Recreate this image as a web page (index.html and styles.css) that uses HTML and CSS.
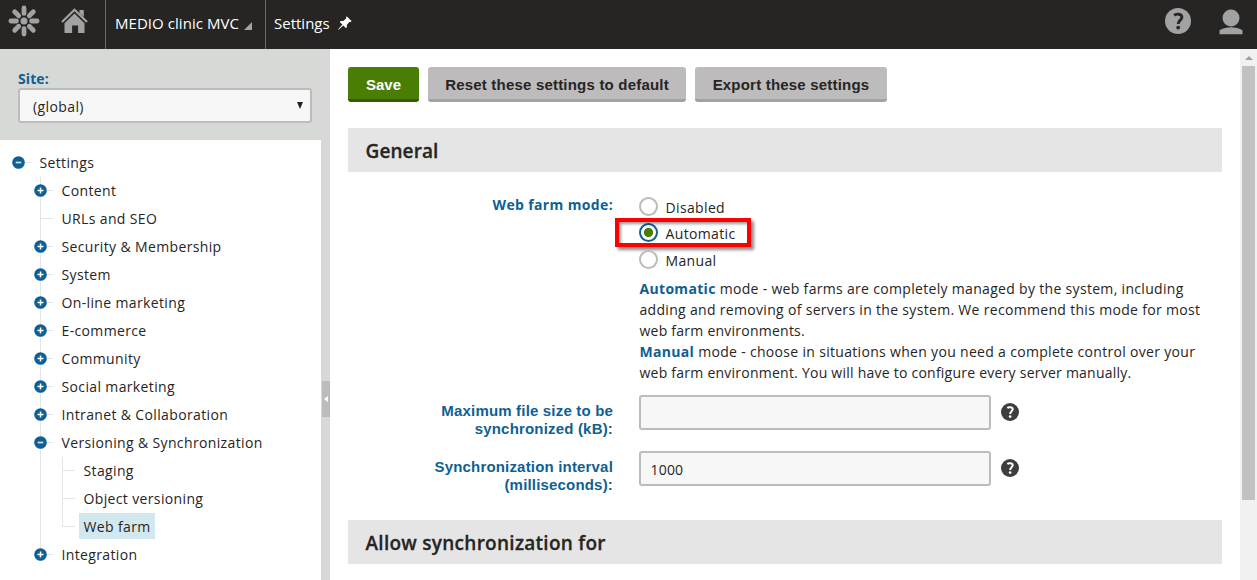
FILE: index.html
```
<!DOCTYPE html>
<html lang="en">
<head>
<meta charset="utf-8">
<title>Settings</title>
<link rel="stylesheet" href="styles.css">
</head>
<body>
<svg class="defs" width="0" height="0">
  <symbol id="plus" viewBox="0 0 13 13"><circle cx="6.5" cy="6.5" r="6.3" fill="#0f5f94"/><path d="M3.5 6.5h6M6.5 3.5v6" stroke="#fff" stroke-width="1.5"/></symbol>
  <symbol id="minus" viewBox="0 0 13 13"><circle cx="6.5" cy="6.5" r="6.3" fill="#0f5f94"/><path d="M3.7 6.5h5.6" stroke="#d3e3ee" stroke-width="1.7"/></symbol>
  <symbol id="help" viewBox="0 0 26 26"><circle cx="13" cy="13" r="13" fill="currentColor"/><path d="M9.2 7.4C11 5.6 16.900 5.500 16.900 9.200C16.900 12.100 13.200 12.200 13.200 16" fill="none" stroke="var(--mark)" stroke-width="2.9"/><circle cx="13.200" cy="19.600" r="1.900" fill="var(--mark)"/></symbol>
</svg>
<header class="topbar">
  <svg class="logo" width="32" height="32" viewBox="0 0 32 32" stroke="#a3a2a2" stroke-linecap="round" fill="none">
    <circle cx="16" cy="16" r="3.500" fill="#a3a2a2" stroke="none"/>
    <g stroke-width="4.800"><path d="M16 2.900v5.500M16 23.600v5.500M2.900 16h5.500M23.600 16h5.500M6.700 6.700l4 4M21.300 21.300l4 4M25.300 6.700l-4 4M10.700 21.300l-4 4"/></g>
  </svg>
  <svg class="home" width="27" height="26" viewBox="0 0 27 26"><path d="M1 14L13.500 1.800 26 14" fill="none" stroke="#a3a2a2" stroke-width="2.300"/><path d="M18.500 2h4.300v7l-4.300-4.100z" fill="#a3a2a2"/><path d="M3.500 15.200l10-9.700 10 9.700V25h-6.400v-7.500h-6V25H3.500z" fill="#a3a2a2"/></svg>
  <div class="site"><span class="site-name">MEDIO clinic MVC</span><svg width="8" height="8" viewBox="0 0 8 8"><path d="M8 0v8H0z" fill="#a3a2a2"/></svg></div>
  <div class="app"><span class="app-name">Settings</span><svg width="14" height="14" viewBox="0 0 14 14"><path d="M8.700.3L13.700 5.300 12.200 6 11.400 5.900 8.900 8.800 8.800 11.600 7.800 12 5.300 9.500.6 13.700.2 13.300 4.400 8.600 1.900 6.200 2.500 5.100 5.300 5 8.200 2.500 8 1.700z" fill="#fff"/></svg></div>
  <div class="tools">
    <svg class="help-top" width="26" height="26"><use href="#help"/></svg>
    <svg class="user" width="24" height="26" viewBox="0 0 24 26"><circle cx="12" cy="9" r="8.500" fill="#a3a2a2"/><path d="M.5 25.200v-4c4-2.200 7.400-3 11.500-3s7.500.8 11.500 3v4z" fill="#a3a2a2"/></svg>
  </div>
</header>
<div class="workspace">
  <aside class="sidebar">
    <div class="site-panel">
      <label class="site-label">Site:</label>
      <div class="select"><span class="global">(global)</span><svg width="6" height="7" viewBox="0 0 6 7"><path d="M0 0h6L3 7z" fill="#222"/></svg></div>
    </div>
    <div class="tree-area">
      <nav class="tree">
        <div class="node"><svg class="knob"><use href="#minus"/></svg><i class="twig"></i><span>Settings</span></div>
        <div class="branch">
          <div class="node"><svg class="knob"><use href="#plus"/></svg><i class="twig"></i><span>Content</span></div>
          <div class="node"><i class="knob"></i><i class="twig leaf"></i><span>URLs and SEO</span></div>
          <div class="node"><svg class="knob"><use href="#plus"/></svg><i class="twig"></i><span>Security &amp; Membership</span></div>
          <div class="node"><svg class="knob"><use href="#plus"/></svg><i class="twig"></i><span>System</span></div>
          <div class="node"><svg class="knob"><use href="#plus"/></svg><i class="twig"></i><span>On-line marketing</span></div>
          <div class="node"><svg class="knob"><use href="#plus"/></svg><i class="twig"></i><span>E-commerce</span></div>
          <div class="node"><svg class="knob"><use href="#plus"/></svg><i class="twig"></i><span>Community</span></div>
          <div class="node"><svg class="knob"><use href="#plus"/></svg><i class="twig"></i><span>Social marketing</span></div>
          <div class="node"><svg class="knob"><use href="#plus"/></svg><i class="twig"></i><span>Intranet &amp; Collaboration</span></div>
          <div class="node"><svg class="knob"><use href="#minus"/></svg><i class="twig"></i><span>Versioning &amp; Synchronization</span></div>
          <div class="branch inner">
            <div class="node"><i class="knob"></i><i class="twig leaf"></i><span>Staging</span></div>
            <div class="node"><i class="knob"></i><i class="twig leaf"></i><span>Object versioning</span></div>
            <div class="node"><i class="knob"></i><i class="twig leaf"></i><span class="selected">Web farm</span></div>
          </div>
          <div class="node"><svg class="knob"><use href="#plus"/></svg><i class="twig"></i><span>Integration</span></div>
        </div>
      </nav>
      <div class="splitter"><div class="grip"><svg width="4" height="6" viewBox="0 0 4 6"><path d="M4 0v6L0 3z" fill="#fff"/></svg></div></div>
    </div>
  </aside>
  <main class="content">
    <div class="actions">
      <button class="btn save">Save</button>
      <button class="btn reset">Reset these settings to default</button>
      <button class="btn export">Export these settings</button>
    </div>
    <h2 class="section"><span>General</span></h2>
    <div class="row mode-row">
      <div class="label mode-label"><span>Web farm mode:</span></div>
      <div class="control">
        <div class="radio"><i class="dot"></i><span>Disabled</span></div>
        <div class="radio checked"><i class="dot"></i><span>Automatic</span><div class="highlight"></div></div>
        <div class="radio"><i class="dot"></i><span>Manual</span></div>
        <p class="desc">
          <span class="wide"><b>Automatic</b> mode - web farms are completely managed by the system, including</span>
          <span class="wide">adding and removing of servers in the system. We recommend this mode for most</span>
          <span>web farm environments.</span>
          <span class="wide"><b>Manual</b> mode - choose in situations when you need a complete control over your</span>
          <span>web farm environment. You will have to configure every server manually.</span>
        </p>
      </div>
    </div>
    <div class="row">
      <div class="label"><span>Maximum file size to be</span><span>synchronized (kB):</span></div>
      <div class="control field"><div class="input"></div><svg class="help"><use href="#help"/></svg></div>
    </div>
    <div class="row">
      <div class="label"><span>Synchronization interval</span><span>(milliseconds):</span></div>
      <div class="control field"><div class="input"><span>1000</span></div><svg class="help"><use href="#help"/></svg></div>
    </div>
    <h2 class="section second"><span>Allow synchronization for</span></h2>
  </main>
  <div class="scrollbar"><svg width="8" height="4" viewBox="0 0 8 4"><path d="M4 0l4 4H0z" fill="#a0a0a0"/></svg><div class="thumb"></div></div>
</div>
</body>
</html>
```

FILE: styles.css
```
* { box-sizing: border-box; }
body { margin: 0; height: 580px; overflow: hidden; background: #fff; color: #262524; font: 14px/20px "Open Sans", "Noto Sans", sans-serif; }
svg { display: block; flex: none; }
.defs { position: absolute; }
span { white-space: nowrap; }

.topbar { height: 49px; background: #262524; display: flex; color: #fff; font-size: 15px; }
.logo { margin: 5px 0 0 8px; }
.home { margin: 8px 0 0 21px; }
.site { margin-left: 17px; width: 161px; border-left: 1px solid #6b6a6a; border-right: 1px solid #6b6a6a; display: flex; padding: 13px 0 0 9px; }
.site svg { margin: 9px 0 0 5px; }
.site-name { width: 124px; letter-spacing: .05px; }
.app { display: flex; padding: 13px 0 0 8px; }
.app-name { width: 55px; }
.app svg { margin: 3px 0 0 9px; }
.tools { margin-left: auto; display: flex; padding-right: 14px; }
.help-top { margin: 8px 28px 0 0; color: #a3a2a2; --mark: #262524; }
.user { margin-top: 9px; }

.workspace { display: flex; height: 531px; }
.sidebar { width: 330px; flex: none; display: flex; flex-direction: column; }
.site-panel { height: 91px; background: #d6d9d6; padding: 20px 18px 0; }
.site-label { display: block; height: 19px; color: #0f5f94; font-weight: 700; letter-spacing: .1px; }
.select { width: 294px; height: 35px; border: 2px solid #bdbbbb; border-radius: 3px; background: #f7f7f7; display: flex; justify-content: space-between; padding: 7px 7px 0 13px; letter-spacing: .4px; }
.select svg { margin-top: 5px; }
.tree-area { flex: 1; display: flex; }
.tree { flex: 1; padding: 8px 0 0 12px; letter-spacing: .36px; }
.node { height: 28px; display: flex; align-items: center; }
.node span { margin-left: 4px; padding: 4px 4px 2px 4.500px; }
.node .selected { background: #d0e8ee; }
.knob { width: 13px; height: 13px; }
.twig { width: 6px; height: 1px; background: #e5e5e5; }
.twig.leaf { width: 13px; margin-left: -7px; }
.branch { margin-left: 22px; background: linear-gradient(#e5e5e5, #e5e5e5) 6px 1px / 1px 376px no-repeat; }
.branch.inner { background-size: 1px 69px; }
.splitter { width: 9px; background: #d6d9d6; padding: 241px 0 0 1px; }
.grip { height: 36px; background: #bdbbbb; display: flex; align-items: center; padding-left: 2px; }

.content { flex: 1; padding: 18px 18px 0; }
.actions { display: flex; gap: 9px; }
.btn { height: 35px; border: 0; border-bottom: 3px solid #a3a2a2; border-radius: 3px; background: #bdbbbb; color: #262524; font: 700 15px/18px "Liberation Sans", Arial, sans-serif; padding: 3px 0 0; }
.save { width: 71px; background: #497d04; border-color: #325b01; color: #fff; }
.reset { width: 258px; letter-spacing: .2px; }
.export { width: 192px; letter-spacing: .2px; }
.section { margin: 26px 0 0; height: 44px; background: #e5e5e5; padding: 10px 17px 0 17.500px; font-size: 19px; line-height: 27px; font-weight: 600; letter-spacing: .1px; -webkit-text-stroke: .3px #262524; }
.row { display: flex; height: 56px; }
.mode-row { height: 223px; padding-top: 21px; }
.label { width: 265px; flex: none; padding-top: 7px; color: #0f5f94; font: 700 15px/18px "Liberation Sans", Arial, sans-serif; display: flex; flex-direction: column; align-items: flex-end; letter-spacing: .18px; }
.mode-label { font: 700 14px/20px "Open Sans", sans-serif; padding-top: 2px; letter-spacing: .36px; }
.control { margin-left: 26px; flex: 1; }
.radio { height: 26.500px; display: flex; align-items: center; position: relative; letter-spacing: .36px; }
.radio span { margin-left: 8.500px; padding-top: 3px; }
.radio.checked span { padding-top: 2px; }
.dot { width: 19px; height: 19px; margin-right: -1px; border: 2px solid #bdbbbb; border-radius: 50%; background: #fff; }
.checked .dot { border-color: #0f6194; background: radial-gradient(circle, #497d04 4.200px, #fff 5px); }
.highlight { position: absolute; left: -24px; top: -2px; width: 136px; height: 29px; border: 4px solid #fe0000; box-shadow: 3px 3px 3px rgba(0,0,0,.45), inset 2px 2px 3px rgba(0,0,0,.4); }
.desc { margin: 5px 0 0 .5px; line-height: 21px; letter-spacing: .24px; }
.desc span { display: block; width: max-content; }
.desc .wide { letter-spacing: .315px; }
.desc b { color: #0f5f94; }
.field { display: flex; }
.input { width: 352px; height: 35px; border: 2px solid #bdbbbb; border-radius: 3px; background: #f7f7f7; padding: 7px 9.500px; letter-spacing: .2px; }
.help { width: 18px; height: 18px; margin: 8px 0 0 9.500px; color: #403e3d; --mark: #fff; }
.second { margin-top: 13px; letter-spacing: .27px; }
.scrollbar { width: 17px; background: #f1f1f1; display: flex; flex-direction: column; align-items: center; padding-top: 7px; }
.thumb { width: 13px; height: 434px; margin-top: 6px; background: #c1c1c1; }
```
